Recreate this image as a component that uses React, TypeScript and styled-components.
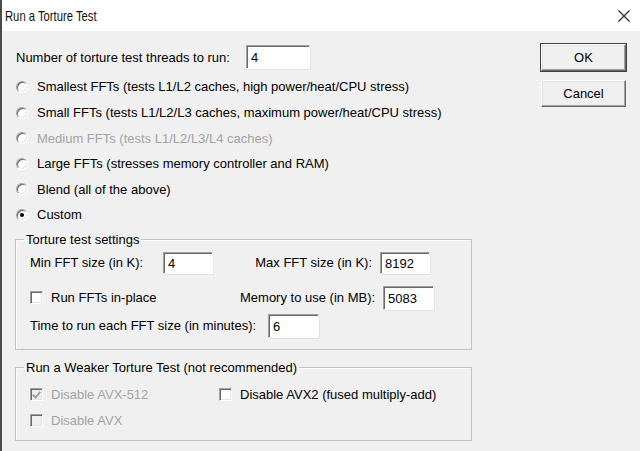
import styled, { createGlobalStyle } from 'styled-components';

const GlobalStyle = createGlobalStyle`
  html, body {
    margin: 0;
    padding: 0;
    background: #f0f0f0;
  }
  * {
    box-sizing: border-box;
  }
`;

const radios = [
  { label: 'Smallest FFTs (tests L1/L2 caches, high power/heat/CPU stress)' },
  { label: 'Small FFTs (tests L1/L2/L3 caches, maximum power/heat/CPU stress)' },
  { label: 'Medium FFTs (tests L1/L2/L3/L4 caches)', disabled: true },
  { label: 'Large FFTs (stresses memory controller and RAM)' },
  { label: 'Blend (all of the above)' },
  { label: 'Custom', checked: true },
];

export default function App() {
  return (
    <>
      <GlobalStyle />
      <Window>
        <TitleBar>
          <Title>Run a Torture Test</Title>
          <CloseIcon width="12" height="12" viewBox="0 0 12 12">
            <path d="M0.5 0.5 L11.5 11.5 M11.5 0.5 L0.5 11.5" stroke="#222" strokeWidth="1.1" />
          </CloseIcon>
        </TitleBar>
        <Body>
          <Main>
            <ThreadRow>
              <Text>Number of torture test threads to run:</Text>
              <TextBox $width={64} $height={24} $left={16}>4</TextBox>
            </ThreadRow>
            <RadioList>
              {radios.map((r) => (
                <RadioRow key={r.label}>
                  <Radio $checked={r.checked} />
                  <Text $disabled={r.disabled}>{r.label}</Text>
                </RadioRow>
              ))}
            </RadioList>
            <Group $top={4} $bottom={11}>
              <Legend>Torture test settings</Legend>
              <SettingsRow $top={3}>
                <Text $width={133}>Min FFT size (in K):</Text>
                <TextBox $width={50} $height={22}>4</TextBox>
                <RightLabel>Max FFT size (in K):</RightLabel>
                <TextBox $width={50} $height={22} $right={41}>8192</TextBox>
              </SettingsRow>
              <SettingsRow $top={11}>
                <Check $width={210}>
                  <CheckBox />
                  <Text>Run FFTs in-place</Text>
                </Check>
                <RightLabel>Memory to use (in MB):</RightLabel>
                <TextBox $width={51} $height={24} $right={39}>5083</TextBox>
              </SettingsRow>
              <SettingsRow $top={4}>
                <Text $width={238}>Time to run each FFT size (in minutes):</Text>
                <TextBox $width={51} $height={24}>6</TextBox>
              </SettingsRow>
            </Group>
            <Group $top={10} $bottom={9}>
              <Legend>Run a Weaker Torture Test (not recommended)</Legend>
              <SettingsRow $top={9} $height={20}>
                <Check $width={189}>
                  <CheckBox $checked $disabled />
                  <Text $disabled>Disable AVX-512</Text>
                </Check>
                <Check>
                  <CheckBox />
                  <Text>Disable AVX2 (fused multiply-add)</Text>
                </Check>
              </SettingsRow>
              <SettingsRow $top={6} $height={20}>
                <Check>
                  <CheckBox $disabled />
                  <Text $disabled>Disable AVX</Text>
                </Check>
              </SettingsRow>
            </Group>
          </Main>
          <Side>
            <Button $default>OK</Button>
            <Button>Cancel</Button>
          </Side>
        </Body>
      </Window>
    </>
  );
}

const Window = styled.div`
  width: 640px;
  height: 451px;
  background: #f0f0f0;
  border-left: 2px solid #4a4a4a;
  display: flex;
  flex-direction: column;
  font-family: 'Liberation Sans', Arial, sans-serif;
  font-size: 13px;
  color: #000;
  overflow: hidden;
`;

const TitleBar = styled.div`
  height: 31px;
  flex: none;
  background: #fff;
  display: flex;
  align-items: center;
  justify-content: space-between;
  padding: 0 12px 0 3px;
`;

const Title = styled.span`
  font-family: 'Liberation Sans', Arial, sans-serif;
  font-size: 15px;
  color: #111;
  display: inline-block;
  transform: scaleX(0.75);
  transform-origin: left center;
`;

const CloseIcon = styled.svg`
  display: block;
  margin-right: -2px;
`;

const Body = styled.div`
  flex: 1;
  display: flex;
  padding: 14px 14px 0 14px;
`;

const Main = styled.div`
  width: 458px;
  display: flex;
  flex-direction: column;
`;

const Side = styled.div`
  margin-left: auto;
  width: 85px;
  display: flex;
  flex-direction: column;
  gap: 9px;
  margin-top: -1px;
`;

const Text = styled.span<{ $disabled?: boolean; $width?: number }>`
  white-space: nowrap;
  color: ${(p) => (p.$disabled ? '#a3a3a3' : '#000')};
  ${(p) => (p.$width ? `width: ${p.$width}px; flex: none;` : '')}
`;

const ThreadRow = styled.div`
  display: flex;
  align-items: center;
  height: 24px;
`;

const TextBox = styled.div<{ $width: number; $height: number; $left?: number; $right?: number }>`
  width: ${(p) => p.$width}px;
  height: ${(p) => p.$height}px;
  flex: none;
  margin-left: ${(p) => p.$left ?? 0}px;
  margin-right: ${(p) => p.$right ?? 0}px;
  background: #fff;
  border-top: 1px solid #a0a0a0;
  border-left: 1px solid #a0a0a0;
  border-right: 1px solid #fff;
  border-bottom: 1px solid #fff;
  box-shadow: inset 1px 1px 0 #696969, 1px 1px 0 #e3e3e3;
  display: flex;
  align-items: center;
  padding-left: 4px;
  padding-top: 1px;
`;

const RadioList = styled.div`
  display: flex;
  flex-direction: column;
  margin-top: 5.2px;
`;

const RadioRow = styled.div`
  display: flex;
  align-items: center;
  height: 25.6px;
`;

const Radio = styled.span<{ $checked?: boolean }>`
  width: 12px;
  height: 12px;
  flex: none;
  margin-right: 9px;
  border-radius: 50%;
  border: 1px solid;
  border-color: #a0a0a0 #fff #fff #a0a0a0;
  background: #fff;
  box-shadow: inset 1px 1px 0 #696969, inset -1px -1px 0 #e3e3e3;
  position: relative;
  &::after {
    content: '';
    display: ${(p) => (p.$checked ? 'block' : 'none')};
    position: absolute;
    left: 3px;
    top: 3px;
    width: 4px;
    height: 4px;
    border-radius: 50%;
    background: #000;
  }
`;

const Group = styled.fieldset<{ $top: number; $bottom?: number }>`
  margin: ${(p) => p.$top}px 0 0 -1px;
  width: 457px;
  padding: 0 0 ${(p) => p.$bottom ?? 10}px 14px;
  border: 1px solid #c2c2c2;
  box-shadow: inset 1px 1px 0 #fff;
  min-width: 0;
`;

const Legend = styled.legend`
  padding: 0 2px;
  margin-left: -6px;
  line-height: 16px;
  white-space: nowrap;
`;

const SettingsRow = styled.div<{ $top: number; $height?: number }>`
  display: flex;
  align-items: center;
  margin-top: ${(p) => p.$top}px;
  height: ${(p) => p.$height ?? 24}px;
`;

const RightLabel = styled.span`
  flex: 1;
  text-align: right;
  padding-right: 8px;
  white-space: nowrap;
`;

const Check = styled.div<{ $width?: number }>`
  display: flex;
  align-items: center;
  ${(p) => (p.$width ? `width: ${p.$width}px; flex: none;` : '')}
`;

const CheckBox = styled.span<{ $checked?: boolean; $disabled?: boolean }>`
  width: 13px;
  height: 13px;
  flex: none;
  margin-right: 8px;
  border: 1px solid;
  border-color: #a0a0a0 #fff #fff #a0a0a0;
  background: ${(p) => (p.$disabled ? '#f0f0f0' : '#fff')};
  box-shadow: inset 1px 1px 0 #696969, inset -1px -1px 0 #e3e3e3;
  position: relative;
  &::after {
    content: '';
    display: ${(p) => (p.$checked ? 'block' : 'none')};
    position: absolute;
    left: 3px;
    top: 1px;
    width: 3px;
    height: 6px;
    border: solid ${(p) => (p.$disabled ? '#a0a0a0' : '#000')};
    border-width: 0 2px 2px 0;
    transform: rotate(40deg);
  }
`;

const Button = styled.div<{ $default?: boolean }>`
  height: 27px;
  display: flex;
  align-items: center;
  justify-content: center;
  background: #f0f0f0;
  border-top: 1px solid #fff;
  border-left: 1px solid #fff;
  border-right: 1px solid #696969;
  border-bottom: 1px solid #696969;
  box-shadow: inset -1px -1px 0 #a0a0a0, inset 1px 1px 0 #e3e3e3;
  ${(p) => (p.$default ? 'outline: 1px solid #404040;' : '')}
`;
